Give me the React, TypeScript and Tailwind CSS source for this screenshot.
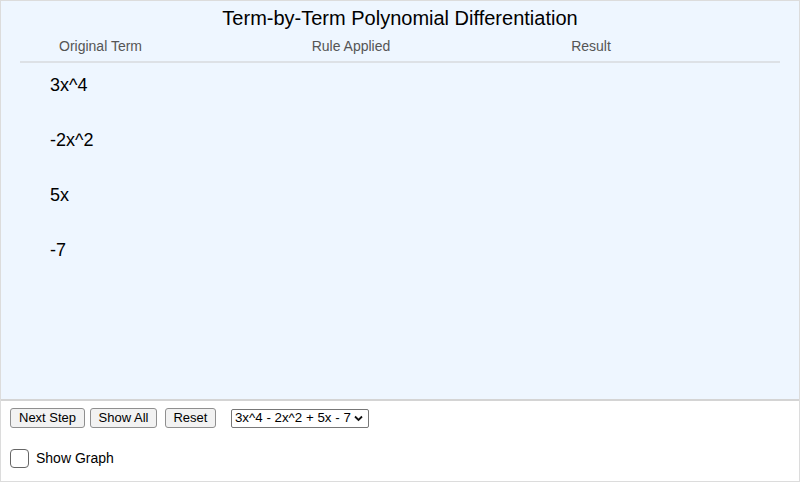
import { useState } from "react";

const terms = ["3x^4", "-2x^2", "5x", "-7"];

export default function App() {
  const [showGraph, setShowGraph] = useState(false);

  return (
    <div className="w-[800px] h-[482px] flex flex-col border border-[#dcdcdc] font-['Liberation_Sans',Arial,sans-serif] text-black bg-white">
      {/* work area */}
      <div className="h-[400px] shrink-0 bg-[#eef6ff] border-b-2 border-[#d4d4d4] px-[19px]">
        <h1 className="text-center text-[20px] leading-[24px] pt-[5px]">
          Term-by-Term Polynomial Differentiation
        </h1>
        <div className="grid grid-cols-[161px_340px_140px_1fr] mt-[8px] pb-[6px] border-b-2 border-[#dde1e6] text-[14px] leading-[17px] text-[#555]">
          <div className="text-center">Original Term</div>
          <div className="text-center">Rule Applied</div>
          <div className="text-center">Result</div>
          <div />
        </div>
        <div className="flex flex-col pl-[30px] pt-[11px]">
          {terms.map((t) => (
            <div key={t} className="h-[55px] text-[18px] leading-[22px]">
              {t}
            </div>
          ))}
        </div>
      </div>

      {/* controls */}
      <div className="flex flex-col px-[9px] pt-[7px]">
        <div className="flex items-center text-[13px]">
          <button className="h-[20px] px-[8px] rounded-[3px] border border-[#8f8f8f] bg-[#f2f2f2] leading-[18px]">
            Next Step
          </button>
          <button className="ml-[5px] h-[20px] px-[7.5px] rounded-[3px] border border-[#8f8f8f] bg-[#f2f2f2] leading-[18px]">
            Show All
          </button>
          <button className="ml-[8px] h-[20px] px-[7.5px] rounded-[3px] border border-[#8f8f8f] bg-[#f2f2f2] leading-[18px]">
            Reset
          </button>
          <div className="ml-[15px] h-[19px] w-[138px] flex items-center gap-[3px] border border-[#777] rounded-[2px] bg-white px-[3px] text-[13.33px]">
            <span>3x^4 - 2x^2 + 5x - 7</span>
            <svg width="9" height="7" viewBox="0 0 9 7" className="mt-[1px]">
              <path d="M1 1.5 L4.5 5 L8 1.5" fill="none" stroke="#111" strokeWidth="1.8" />
            </svg>
          </div>
        </div>
        <label className="flex items-center gap-[7px] mt-[20px] text-[14px] cursor-pointer">
          <button
            onClick={() => setShowGraph(!showGraph)}
            className="w-[19px] h-[19px] rounded-[4px] border-[1.5px] border-[#666] bg-white"
            aria-label="Show Graph"
          />
          <span>Show Graph</span>
        </label>
      </div>
    </div>
  );
}
